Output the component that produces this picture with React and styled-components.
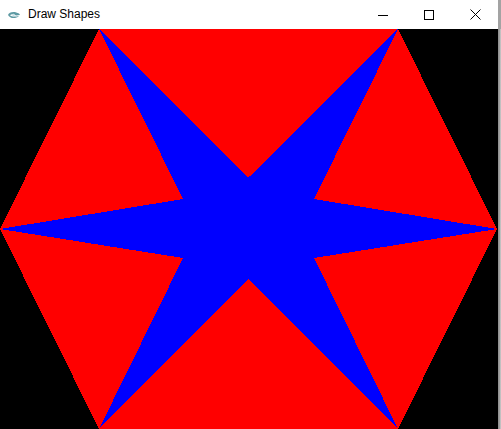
import React from 'react'
import styled, { createGlobalStyle } from 'styled-components'

const GlobalStyle = createGlobalStyle`
  html, body {
    margin: 0;
    padding: 0;
    background: #ffffff;
    overflow: hidden;
  }
`

const Window = styled.div`
  width: 501px;
  height: 429px;
  display: flex;
  flex-direction: column;
  font-family: "Liberation Sans", Arial, sans-serif;
`

const TitleBar = styled.div`
  height: 29px;
  display: flex;
  align-items: center;
  background: #ffffff;
  border-right: 3px solid #a3a3a3;
`

const AppIcon = styled.svg`
  width: 14px;
  height: 10px;
  margin-left: 7px;
  margin-right: 7px;
`

const Title = styled.span`
  font-size: 12px;
  color: #000000;
  flex: 1;
  padding-bottom: 1px;
`

const Controls = styled.div`
  display: flex;
  height: 100%;
`

const ControlButton = styled.div`
  width: 46px;
  height: 100%;
  display: flex;
  align-items: center;
  justify-content: center;
`

const Body = styled.div`
  display: flex;
  flex: 1;
`

const Canvas = styled.svg`
  display: block;
  width: 498px;
  height: 400px;
  background: #000000;
`

const Edge = styled.div`
  width: 3px;
  background: linear-gradient(to right, #8c8c8c, #a8a8a8 66%, #d8d8d8);
`

const hexagon = [
  [99, 0], [398, 0], [497, 200], [398, 400], [99, 400], [0, 200],
]

const star = [
  [99, 0], [183, 170], [0, 200], [183, 229], [99, 400], [248, 250],
  [398, 400], [314, 229], [497, 200], [314, 170], [398, 0], [248, 149],
]

const toPoints = (pts) => pts.map((p) => p.join(',')).join(' ')

function App() {
  return (
    <>
      <GlobalStyle />
      <Window>
        <TitleBar>
          <AppIcon viewBox="0 0 14 10">
            <path d="M1 5 C2 1.5 8 1 12 3.5 L13 5 L9 5.5 C7 4 4 4 3 5.2 C4 6.5 8 7 12 6 C9 8.8 3 9 1 5 Z" fill="#5e9aa3" />
            <circle cx="6.5" cy="5" r="1.2" fill="#c9e0e4" />
          </AppIcon>
          <Title>Draw Shapes</Title>
          <Controls>
            <ControlButton>
              <svg width="10" height="10" viewBox="0 0 10 10">
                <path d="M0 5.5 H10" stroke="#000" strokeWidth="1" />
              </svg>
            </ControlButton>
            <ControlButton>
              <svg width="10" height="10" viewBox="0 0 10 10">
                <rect x="0.5" y="0.5" width="9" height="9" fill="none" stroke="#000" strokeWidth="1" />
              </svg>
            </ControlButton>
            <ControlButton>
              <svg width="11" height="11" viewBox="0 0 11 11">
                <path d="M0.5 0.5 L10.5 10.5 M10.5 0.5 L0.5 10.5" stroke="#000" strokeWidth="1" />
              </svg>
            </ControlButton>
          </Controls>
        </TitleBar>
        <Body>
          <Canvas viewBox="0 0 498 400" shapeRendering="crispEdges">
            <polygon points={toPoints(hexagon)} fill="#ff0000" />
            <polygon points={toPoints(star)} fill="#0000ff" />
          </Canvas>
          <Edge />
        </Body>
      </Window>
    </>
  )
}

export default App
